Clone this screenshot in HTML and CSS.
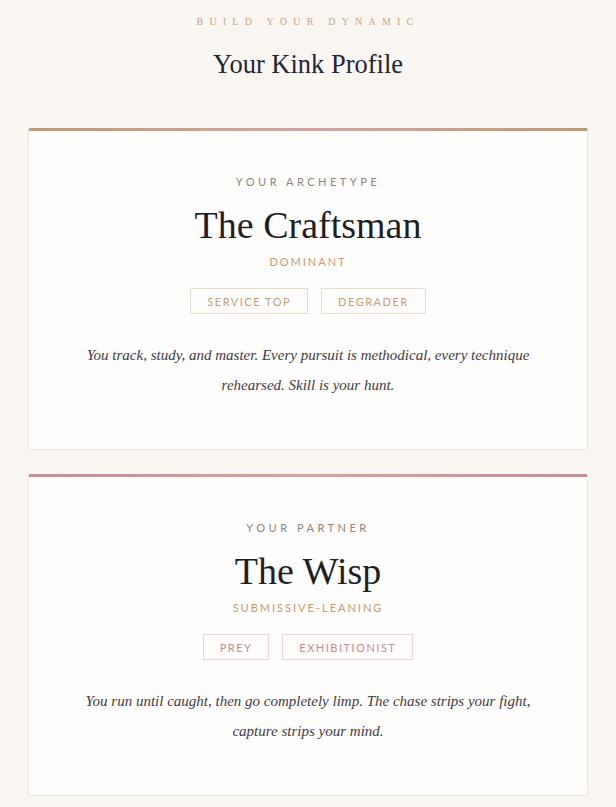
FILE: index.html
```html
<!DOCTYPE html>
<html>
<head>
<meta charset="utf-8">
<link rel="stylesheet" href="styles.css">
</head>
<body>
<main class="page">
  <header class="intro">
    <p class="eyebrow">Build your dynamic</p>
    <h1 class="page-title">Your Kink Profile</h1>
  </header>

  <section class="card card-self">
    <p class="label">Your Archetype</p>
    <h2 class="name">The Craftsman</h2>
    <p class="role">Dominant</p>
    <div class="tags">
      <span class="tag">Service Top</span>
      <span class="tag">Degrader</span>
    </div>
    <p class="desc">You track, study, and master. Every pursuit is methodical, every technique rehearsed. Skill is your hunt.</p>
  </section>

  <section class="card card-partner">
    <p class="label">Your Partner</p>
    <h2 class="name">The Wisp</h2>
    <p class="role">Submissive-Leaning</p>
    <div class="tags">
      <span class="tag tag-rose">Prey</span>
      <span class="tag tag-rose">Exhibitionist</span>
    </div>
    <p class="desc">You run until caught, then go completely limp. The chase strips your fight, capture strips your mind.</p>
  </section>
</main>
</body>
</html>
```
FILE: styles.css
```css
* { box-sizing: border-box; }
html, body { margin: 0; padding: 0; }
body {
  background: #f9f6f2;
  font-family: "Liberation Serif", "Times New Roman", serif;
  color: #2a2a36;
}
.page {
  padding: 14px 28px 11px;
  display: flex;
  flex-direction: column;
  gap: 24px;
}
.intro {
  text-align: center;
  padding-bottom: 24px;
}
.eyebrow {
  margin: 0;
  font-size: 10px;
  letter-spacing: 6.2px;
  text-transform: uppercase;
  color: #c9a57c;
  line-height: 16px;
}
.page-title {
  margin: 18px 0 0;
  font-weight: 400;
  font-size: 26.5px;
  line-height: 32px;
  color: #232535;
}
.card {
  background: #fefdfb;
  border: 1px solid #ece7e0;
  border-top: none;
  text-align: center;
  padding: 47px 40px 49px;
  position: relative;
}
.card::before {
  content: "";
  position: absolute;
  left: 0; right: 0; top: 0;
  height: 3px;
}
.card-self::before { background: linear-gradient(90deg, #c29a70, #d6a3a0 50%, #c29a70); }
.card-partner::before { background: linear-gradient(90deg, #c98a92, #d9a3a0 50%, #c98a92); }
.label {
  margin: 0;
  font-family: "Lato", "Liberation Sans", sans-serif;
  font-size: 11px;
  letter-spacing: 3.5px;
  text-transform: uppercase;
  color: #8b8580;
  line-height: 14px;
}
.name {
  margin: 13px 0 0;
  font-weight: 400;
  font-size: 38px;
  line-height: 46px;
  color: #1e1e26;
}
.role {
  margin: 7px 0 0;
  font-family: "Lato", "Liberation Sans", sans-serif;
  font-size: 11px;
  letter-spacing: 2px;
  text-transform: uppercase;
  color: #c19c74;
  line-height: 14px;
}
.tags {
  display: flex;
  justify-content: center;
  gap: 13px;
  margin-top: 19px;
}
.tag {
  border: 1px solid #e9dccb;
  height: 26px;
  padding: 0 16px;
  display: flex;
  align-items: center;
  font-family: "Lato", "Liberation Sans", sans-serif;
  font-size: 11px;
  letter-spacing: 1.5px;
  text-transform: uppercase;
  color: #c4a07a;
}
.tag-rose { border-color: #ecd3d5; color: #c98a92; }
.desc {
  margin: 26px 0 0;
  font-style: italic;
  font-size: 15px;
  line-height: 30px;
  color: #3f3a44;
}
```
